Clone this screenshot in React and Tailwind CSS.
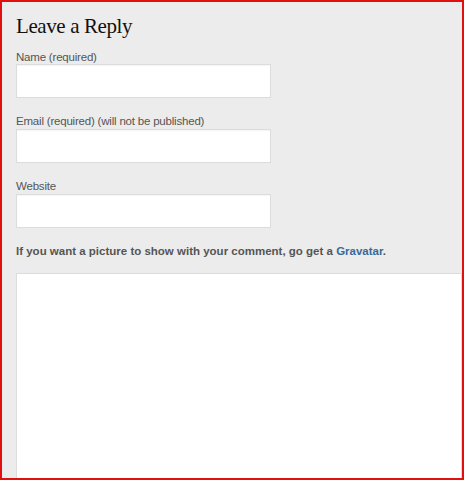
export default function App() {
  const label = "block text-[11.5px] leading-[14px] tracking-[-0.2px] text-[#555] font-['Liberation_Sans',Arial,sans-serif]";
  const input = "block w-[255px] h-[34px] bg-white border border-[#dcdcdc] shadow-[inset_0_1px_1px_rgba(0,0,0,0.04)]";
  return (
    <div className="w-[464px] h-[480px] border-2 border-[#e01010] bg-[#ececec] overflow-hidden">
      <div className="pl-[14px] pt-[11px]">
        <h3 className="text-[21px] leading-[26px] tracking-[-0.4px] text-[#111] font-['Liberation_Serif',Georgia,serif]">
          Leave a Reply
        </h3>
        <label className={`${label} mt-[11px]`}>Name (required)</label>
        <div className={input}></div>
        <label className={`${label} mt-[16px]`}>Email (required) (will not be published)</label>
        <div className={`${input} mt-[1px]`}></div>
        <label className={`${label} mt-[16px]`}>Website</label>
        <div className={`${input} mt-[1px]`}></div>
        <p className="mt-[16px] text-[11.5px] leading-[14px] font-bold text-[#555] font-['Liberation_Sans',Arial,sans-serif]">
          If you want a picture to show with your comment, go get a{" "}
          <a className="text-[#3a6a98]">Gravatar</a>.
        </p>
        <div className="mt-[15px] h-[260px] bg-white border border-[#dcdcdc]"></div>
      </div>
    </div>
  );
}
